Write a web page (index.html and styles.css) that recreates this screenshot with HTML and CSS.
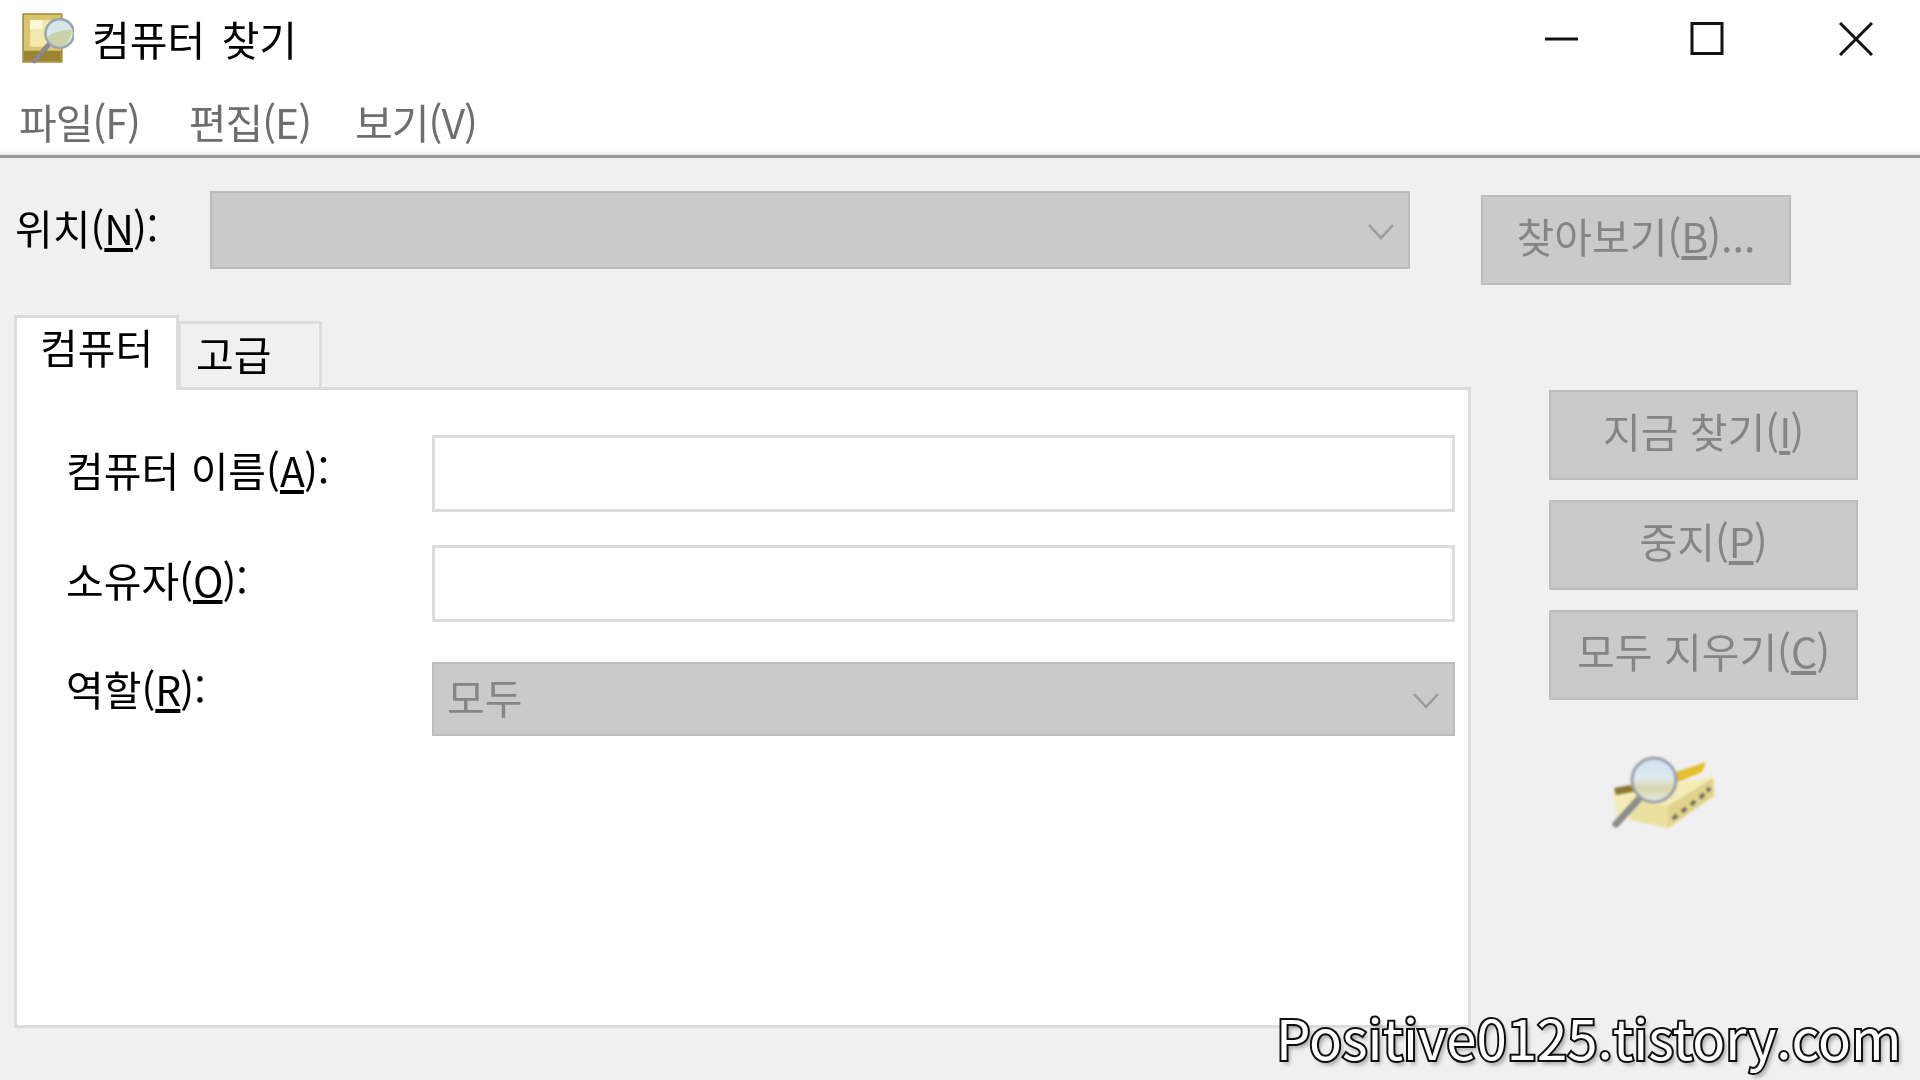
FILE: index.html
```html
<!DOCTYPE html>
<html lang="ko">
<head>
  <meta charset="UTF-8">
  <title>컴퓨터 찾기</title>
  <link rel="stylesheet" href="styles.css">
</head>
<body>

  <div class="titlebar">
    <svg class="app-icon" viewBox="0 0 52 52">
      <rect x="2" y="2" width="38" height="47" fill="#d9c46f" stroke="#a08a35" stroke-width="1.5"/>
      <rect x="3" y="38" width="36" height="10" fill="#9c8430"/>
      <rect x="9" y="8" width="24" height="26" fill="#f2e8ae"/>
      <rect x="9" y="8" width="12" height="9" fill="#fbf7da"/>
      <line x1="28" y1="31" x2="13" y2="48" stroke="#8a8a8a" stroke-width="5" stroke-linecap="round"/>
      <circle cx="38" cy="21" r="14" fill="#d7e6ea" stroke="#9aa6ad" stroke-width="2.5"/>
      <path d="M26 24 Q38 16 50 18 Q48 32 38 34 Q29 33 26 24 Z" fill="#c9d2a8"/>
    </svg>
    <span class="title">컴퓨터 찾기</span>
    <div class="controls">
      <svg viewBox="0 0 34 34"><line x1="0" y1="17" x2="33" y2="17"/></svg>
      <svg viewBox="0 0 34 34"><rect x="2" y="1.5" width="30" height="30"/></svg>
      <svg viewBox="0 0 34 34"><line x1="1" y1="1" x2="33" y2="33"/><line x1="33" y1="1" x2="1" y2="33"/></svg>
    </div>
  </div>

  <div class="menubar">
    <span>파일(F)</span>
    <span>편집(E)</span>
    <span>보기(V)</span>
  </div>

  <div class="location-row">
    <label class="location-label">위치(<u>N</u>):</label>
    <div class="combo location-combo">
      <svg class="chevron" viewBox="0 0 26 16"><path d="M1 1 L13 14 L25 1"/></svg>
    </div>
    <button class="browse" disabled>찾아보기(<u>B</u>)...</button>
  </div>

  <div class="main">
    <div class="left">
      <div class="tabs">
        <div class="tab active">컴퓨터</div>
        <div class="tab">고급</div>
      </div>
      <div class="panel">
        <div class="field">
          <label>컴퓨터 이름(<u>A</u>):</label>
          <div class="textbox"></div>
        </div>
        <div class="field">
          <label>소유자(<u>O</u>):</label>
          <div class="textbox"></div>
        </div>
        <div class="field role">
          <label>역할(<u>R</u>):</label>
          <div class="combo role-combo">
            <span>모두</span>
            <svg class="chevron" viewBox="0 0 26 16"><path d="M1 1 L13 14 L25 1"/></svg>
          </div>
        </div>
      </div>
    </div>

    <div class="actions">
      <button disabled>지금 찾기(<u>I</u>)</button>
      <button disabled>중지(<u>P</u>)</button>
      <button disabled>모두 지우기(<u>C</u>)</button>
      <svg class="search-icon" viewBox="0 0 105 80">
        <defs>
          <linearGradient id="lens" x1="0" y1="0" x2="0" y2="1">
            <stop offset="0" stop-color="#cfe2f3"/>
            <stop offset="0.45" stop-color="#dfe9ee"/>
            <stop offset="0.7" stop-color="#d8d6ae"/>
            <stop offset="1" stop-color="#e6ecec"/>
          </linearGradient>
        </defs>
        <path d="M60 20 L96 8 L92 18 L68 28 Z" fill="#e3bf2c"/>
        <path d="M3 36 L22 32 L66 30 L103 22 L104 42 L58 74 L6 62 Z" fill="#f4ecb4"/>
        <path d="M4 34 L20 31 L28 37 L6 41 Z" fill="#8a7a36"/>
        <path d="M58 52 L103 24 L104 42 L58 74 Z" fill="#e0d28c"/>
        <path d="M63 65 l4 -4 M72 58 l4 -4 M81 51 l4 -4 M90 44 l4 -4 M97 37 l3 -3" stroke="#77725a" stroke-width="4"/>
        <path d="M20 46 L58 52 L58 74 L20 66 Z" fill="#ece0a0"/>
        <line x1="28" y1="46" x2="6" y2="70" stroke="#8c8c8c" stroke-width="7" stroke-linecap="round"/>
        <circle cx="44" cy="26" r="22" fill="url(#lens)" stroke="#9aa0a8" stroke-width="3"/>
      </svg>
    </div>
  </div>

  <div class="watermark">Positive0125.tistory.com</div>

</body>
</html>
```

FILE: styles.css
```css
html, body {
  margin: 0;
  height: 1080px;
  overflow: hidden;
}
body {
  position: relative;
  background: #f0f0f0;
  font-family: "Noto Sans CJK KR", "Noto Sans", sans-serif;
  font-size: 41px;
  line-height: 50px;
  color: #000;
}
u {
  text-underline-offset: 3px;
  letter-spacing: -1px;
}
label, .title, .tab, .menubar span, button, .role-combo span {
  filter: blur(0.4px);
}

.titlebar {
  height: 78px;
  background: #fff;
  display: flex;
  align-items: center;
  padding-left: 21px;
}
.app-icon {
  width: 53px;
  height: 53px;
  margin-top: -2px;
  filter: blur(0.6px);
}
.title {
  margin-left: 18px;
  margin-top: -2px;
  word-spacing: 5px;
}
.controls {
  margin-left: auto;
  display: flex;
  align-items: center;
  gap: 111px;
  padding-right: 47px;
}
.controls svg {
  width: 34px;
  height: 34px;
  margin-top: -1px;
}
.controls svg:last-child {
  margin-left: 4px;
}
.controls line, .controls rect {
  fill: none;
  stroke: #111;
  stroke-width: 3;
}

.menubar {
  height: 77px;
  background: #fff;
  border-bottom: 3px solid #9a9a9a;
  box-shadow: inset 0 -4px 3px -2px #e6e6e6;
  display: flex;
  gap: 49px;
  padding-left: 19px;
  color: #6e6e6e;
  line-height: 86px;
  letter-spacing: -1px;
}
.menubar span:last-child {
  margin-left: -5px;
}

.location-row {
  display: flex;
  align-items: flex-start;
  margin-top: 33px;
  height: 94px;
}
.location-label {
  width: 195px;
  margin-left: 15px;
  line-height: 72px;
}
.combo {
  background: #cacaca;
  border: 2px solid #bdbdbd;
  box-sizing: border-box;
  display: flex;
  align-items: center;
  justify-content: space-between;
}
.location-combo {
  width: 1200px;
  height: 78px;
  justify-content: flex-end;
}
.chevron {
  width: 26px;
  height: 16px;
  margin: 4px 14px 0 0;
}
.chevron path {
  fill: none;
  stroke: #9a9a9a;
  stroke-width: 2.5;
}

button {
  font: inherit;
  color: #858585;
  background: #cacaca;
  border: 2px solid #bdbdbd;
  padding: 0 0 10px;
  display: block;
}
.browse {
  width: 310px;
  height: 90px;
  margin: 4px 0 0 71px;
}

.main {
  display: flex;
  margin-top: 31px;
}
.left {
  width: 1457px;
  margin-left: 14px;
}
.tabs {
  display: flex;
  align-items: flex-end;
  height: 71px;
  position: relative;
  z-index: 1;
}
.tab {
  box-sizing: border-box;
  border: 3px solid #dcdcdc;
  border-bottom: none;
  width: 144px;
  height: 66px;
  padding-left: 15px;
  margin-left: -1px;
  line-height: 58px;
}
.tab.active {
  width: 165px;
  height: 75px;
  margin-left: 0;
  margin-bottom: -3px;
  background: #fff;
  padding-left: 23px;
  line-height: 56px;
}
.panel {
  box-sizing: border-box;
  height: 641px;
  background: #fff;
  border: 3px solid #dcdcdc;
  padding: 45px 12px 0 49px;
}
.field {
  display: flex;
  align-items: center;
  margin-bottom: 33px;
}
.field label {
  width: 366px;
  margin-top: -9px;
}
.textbox {
  width: 1023px;
  height: 77px;
  box-sizing: border-box;
  background: #fff;
  border: 3px solid #dcdcdc;
}
.field.role {
  margin-top: 40px;
}
.field.role label {
  margin-top: -23px;
}
.role-combo {
  width: 1023px;
  height: 74px;
  padding-left: 13px;
  color: #858585;
}
.role-combo span {
  margin-top: -6px;
}

.actions {
  width: 309px;
  margin-left: 78px;
  padding-top: 74px;
  display: flex;
  flex-direction: column;
  gap: 20px;
}
.actions button {
  width: 309px;
  height: 90px;
}
.search-icon {
  width: 105px;
  height: 80px;
  margin: 34px 0 0 61px;
  filter: blur(0.8px);
}

.watermark {
  position: absolute;
  left: 1276px;
  top: 1001px;
  font-size: 54.5px;
  line-height: 72px;
  color: #fff;
  -webkit-text-stroke: 4px #111;
  paint-order: stroke fill;
  text-shadow: 3px 4px 4px rgba(0, 0, 0, 0.35);
}
```
